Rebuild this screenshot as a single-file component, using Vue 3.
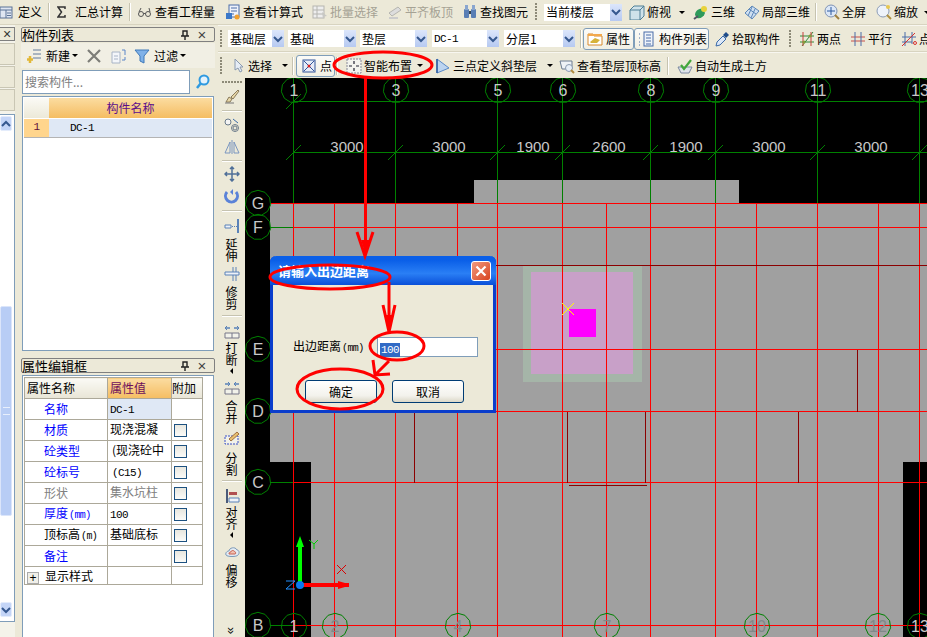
<script setup>
// toolbar icons, 16x16
const icons = {
  define: '<rect x="0" y="3" width="12" height="11" fill="#dfe6f2" stroke="#5b7396"/><path d="M0 6h12M6 6v8M7 9h4M7 11.500h4" stroke="#5b7396" fill="none"/>',
  sigma: '<path d="M1 3h7v2M8 3H1l3.500 5L1 13h7v-2" fill="none" stroke="#333" stroke-width="1.500"/>',
  glasses: '<circle cx="4" cy="10" r="2.500" fill="none" stroke="#555"/><circle cx="11" cy="10" r="2.500" fill="none" stroke="#555"/><path d="M6.500 9.500h2M2 8l2-4M13 8l-1-4" fill="none" stroke="#555"/>',
  calc: '<rect x="4" y="1" width="10" height="12" fill="#eef2fa" stroke="#4a6da8"/><path d="M6 4h6M6 7h6M6 10h3" stroke="#4a6da8"/><rect x="1" y="9" width="6" height="6" fill="#3b78c9"/><circle cx="12" cy="13" r="2.500" fill="#f0a030"/>',
  batch: '<rect x="1" y="2" width="11" height="12" fill="#eee" stroke="#b5b5b0"/><path d="M1 6h11M1 10h11M5 2v12" stroke="#b5b5b0"/><path d="M10 8l5 4-3 .500-1 2.500z" fill="#c8c8c4"/>',
  level: '<path d="M2 9l9-6 3 3-9 6z" fill="#ddd" stroke="#b5b5b0"/><path d="M2 13h9v2H2z" fill="#ccc"/>',
  find: '<rect x="2" y="5" width="5" height="9" rx="1" fill="#5a7fb5"/><rect x="9" y="5" width="5" height="9" rx="1" fill="#5a7fb5"/><rect x="3" y="1" width="3" height="5" fill="#8aa6cf"/><rect x="10" y="1" width="3" height="5" fill="#8aa6cf"/><path d="M7 7h2v3H7z" fill="#345"/>',
  cube: '<path d="M1 6l4-4h10v10l-4 4H1z" fill="#cfe2ea" stroke="#4f7f96"/><path d="M1 6h10v10M11 6l4-4" fill="none" stroke="#4f7f96"/>',
  view3d: '<path d="M2 11c0-4 4-7 8-6l2 4c-1 4-5 6-8 5z" fill="#2e9a5b"/><circle cx="11" cy="5" r="3" fill="#e8d23a"/><path d="M1 15l4-3" stroke="#556" stroke-width="2"/>',
  part3d: '<path d="M1 9l7-7 7 5-7 8z" fill="#cfe0f2" stroke="#5b86b8"/><path d="M5 5l7 5M8 3l-4 9M11 5l-4 9" stroke="#5b86b8" fill="none"/>',
  full: '<circle cx="7" cy="7" r="6" fill="#dbe7f7" stroke="#7f93b5"/><path d="M7 3v8M3 7h8" stroke="#2c5aa0"/><path d="M11 11l4 4" stroke="#a08040" stroke-width="2"/>',
  zoom: '<circle cx="7" cy="7" r="6" fill="#eef3fa" stroke="#8c9db8"/><path d="M11 11l4 4" stroke="#b09040" stroke-width="2"/><circle cx="12" cy="3" r="2" fill="#e8c850"/>',
  attr: '<path d="M1 3h5l1 2h8v9H1z" fill="#fff" stroke="#d88a2c"/><path d="M3 11l5-4 5 2-3 3H4z" fill="#d6b23a"/><path d="M1 3h14v2H1z" fill="#f3a94c"/>',
  list: '<path d="M1 3h2M1 7h2M1 11h2M1 14h2" stroke="#4a6da8" stroke-dasharray="1 1"/><rect x="6" y="1" width="9" height="14" fill="#eef3fa" stroke="#4a6da8"/><path d="M8 4h5M8 7h5M8 10h5M8 13h5" stroke="#4a6da8"/>',
  dropper: '<path d="M2 15l1-4 6-6 3 3-6 6z" fill="#dce8f8" stroke="#3a6aa8"/><path d="M9 4l3-3 3 3-3 3z" fill="#1f4d8a"/>',
  two: '<path d="M3 15L14 1M1 5h14M1 11h14" stroke="#2e8a3a" fill="none"/><path d="M4 1v14M12 1v14" stroke="#c8403a"/><circle cx="5" cy="11" r="1.500" fill="#8a9a3a"/><circle cx="11" cy="5" r="1.500" fill="#8a9a3a"/>',
  parallel: '<path d="M1 6h14M1 10h14" stroke="#c8504a"/><path d="M5 1v14M11 1v14" stroke="#4a6da8"/>',
  pointx: '<path d="M4 1v14M11 1v12M1 6h14M1 11h10" stroke="#4a6da8"/><path d="M1 15L14 2" stroke="#d83030"/><circle cx="14" cy="12" r="1.500" fill="none" stroke="#d83030"/>',
  cursor: '<path d="M5 1v11l3-2 2 4 2-1-2-4h3z" fill="#e6edf6" stroke="#8a9ab0"/>',
  pointbox: '<rect x="2" y="2" width="12" height="12" fill="#e6ecf8" stroke="#33559a"/><path d="M3 3l10 10M13 3L3 13" stroke="#33559a"/><circle cx="8" cy="8" r="1.500" fill="#d82020"/>',
  smart: '<rect x="1" y="1" width="14" height="14" fill="#f3f3ee" stroke="#889" stroke-dasharray="2 1"/><path d="M8 3v3M8 10v3M3 8h3M10 8h3" stroke="#223" stroke-width="1.200"/>',
  tri: '<path d="M2 1l12 9-12 5z" fill="#bcd4f0" stroke="#5a8ac8"/><path d="M2 1v14" stroke="#2c5aa0" stroke-width="1.500"/>',
  top: '<path d="M1 3h12v8H3z" fill="#eef2f6" stroke="#6a7a90"/><circle cx="10" cy="10" r="3.500" fill="#e8f0f8" stroke="#8a9ab0"/><path d="M12 12l3 3" stroke="#b08a40" stroke-width="2"/>',
  auto: '<path d="M1 9h14l-3 6H4z" fill="#dfe3ea" stroke="#7a88a0"/><path d="M4 7l3 4 7-9" fill="none" stroke="#42a83c" stroke-width="2.200"/>',
  add: '<path d="M7 2h8M7 6h8M7 10h8" stroke="#607a9c"/><path d="M4 8v7M1 11.500h6" stroke="#e2b838" stroke-width="2.500"/>',
  del: '<path d="M2 2l12 12M14 2L2 14" stroke="#7d7d78" stroke-width="2.200"/>',
  copy: '<path d="M2 4h8v11H2z" fill="#f4f6fa" stroke="#a8b4c6"/><path d="M4 8h4M4 11h4" stroke="#a8b4c6"/><path d="M12 2h3v5M15 9v3h-3" fill="none" stroke="#5b86c8"/>',
  filter: '<path d="M1 2h14l-5 6v7l-4-2V8z" fill="#7fb1e8" stroke="#3e78b8"/>',
  search: '<circle cx="9" cy="6" r="4.500" fill="#e4f2fc" stroke="#2f9ae0" stroke-width="2"/><path d="M6 9l-4 5" stroke="#2f9ae0" stroke-width="2.500"/>',
  paint: '<path d="M2 14l3-5 3 2-2 3zM7 9l7-7 1 1-6 8z" fill="#e8d8a8" stroke="#8a7a5a"/><path d="M1 15h9" stroke="#777"/>',
  circles: '<circle cx="4" cy="5" r="3" fill="#f4f4f4" stroke="#6a7a8a"/><circle cx="11" cy="11" r="3.500" fill="none" stroke="#6a7a8a"/><circle cx="11" cy="11" r="2" fill="none" stroke="#6a7a8a"/><path d="M9 2l5 4" stroke="#3a6aa8"/>',
  mirror: '<path d="M8 1v14M6 3v11H1zM10 3v11h5z" fill="none" stroke="#7a96c0"/>',
  move: '<path d="M8 1v14M1 8h14M6 3l2-2 2 2M6 13l2 2 2-2M3 6L1 8l2 2M13 6l2 2-2 2" fill="none" stroke="#4f6f98" stroke-width="1.500"/>',
  rotate: '<path d="M3 4a6 6 0 1 0 9 0" fill="none" stroke="#5a82d8" stroke-width="3"/><path d="M9 1v6l-3-3z" fill="#5a82d8"/>',
  extend: '<path d="M14 1v14" stroke="#5a82b8" stroke-width="2"/><path d="M1 7h6v3H1z" fill="#eef2f8" stroke="#5a82b8"/><path d="M8 8.500h5" stroke="#5a82b8" stroke-dasharray="1 1"/>',
  cut: '<path d="M9 1v14M12 1v14" stroke="#5a82b8"/><path d="M1 6h14v3H1z" fill="#eef2f8" stroke="#5a82b8"/>',
  brk: '<path d="M1 4h5M10 4h5" stroke="#5a82b8" stroke-width="1.500"/><path d="M3 2L1 4l2 2M13 2l2 2-2 2" fill="none" stroke="#5a82b8"/><path d="M1 9h14v5H1zM8 9v5" fill="#f2f2ea" stroke="#778"/>',
  merge: '<path d="M1 4h5M10 4h5" stroke="#5a82b8" stroke-width="1.500"/><path d="M4 2l2 2-2 2M12 2l-2 2 2 2" fill="none" stroke="#5a82b8"/><path d="M1 9h14v5H1zM8 9v5" fill="#f2f2ea" stroke="#778"/>',
  split: '<rect x="1" y="6" width="13" height="8" fill="#f2f2ea" stroke="#3a50c8" stroke-dasharray="2 1"/><path d="M5 9l8-7 2 2-8 7z" fill="#e8c070" stroke="#a07040"/>',
  align: '<path d="M3 1v14" stroke="#4a5a7a" stroke-width="2"/><path d="M5 4h8v3H5z" fill="#b05050"/><path d="M5 10h10v4H5z" fill="#eef2f8" stroke="#5a82b8"/>',
  offset: '<path d="M2 11c-1-3 2-4 3-4 0-3 6-5 8-1 2 0 3 3 1 5-1 2-11 2-12 0z" fill="#e4ecf4" stroke="#7a98b8"/><path d="M5 10c0-2 1-2 2-2 0-2 3-2 4 0 1 0 1 2 0 2z" fill="#f0c0b0" stroke="#c86050"/>'
}

const tool = (icon, label, w, extra = {}) => ({ icon, label, w, ...extra })
const sep = (ml = 1) => ({ kind: 'sep', ml })
const grip = (ml = 0) => ({ kind: 'grip', ml })
const combo = (label, w, ml, mono = false) => ({ kind: 'combo', label, w, ml, mono })

const bars = [
  {
    cls: 'bar-top',
    items: [
      tool('define', '定义', 49, { ml: -2 }),
      sep(),
      tool('sigma', '汇总计算', 73, { ml: 5 }),
      sep(),
      tool('glasses', '查看工程量', 83, { ml: 4 }),
      tool('calc', '查看计算式', 87, { ml: 5 }),
      tool('batch', '批量选择', 75, { off: true }),
      tool('level', '平齐板顶', 75, { off: true }),
      tool('find', '查找图元', 72),
      grip(1),
      combo('当前楼层', 78, 3),
      tool('cube', '俯视', 64, { ml: 5, caret: 6 }),
      tool('view3d', '三维', 51),
      tool('part3d', '局部三维', 72),
      sep(1),
      tool('full', '全屏', 52, { ml: 5 }),
      tool('zoom', '缩放', 60, { caret: 4 })
    ]
  },
  {
    cls: 'bar-mid',
    items: [
      grip(),
      combo('基础层', 56, 2),
      combo('基础', 68, 4),
      combo('垫层', 67, 4),
      combo('DC-1', 67, 5, true),
      combo('分层1', 71, 5),
      sep(5),
      tool('attr', '属性', 51, { ml: 1, on: true }),
      tool('list', '构件列表', 75, { on: true, wide: true }),
      tool('dropper', '拾取构件', 75, { ml: 3 }),
      grip(),
      tool('two', '两点', 51, { ml: 2 }),
      tool('parallel', '平行', 51),
      tool('pointx', '点', 40)
    ]
  },
  {
    cls: 'bar-low',
    items: [
      grip(),
      tool('cursor', '选择', 62, { ml: 2, caret: 8 }),
      sep(2),
      tool('pointbox', '点', 39, { ml: 2, on: true, tight: true }),
      sep(1),
      tool('smart', '智能布置', 82, { ml: 6, caret: 3 }),
      tool('tri', '三点定义斜垫层', 121, { ml: 7, caret: 8 }),
      tool('top', '查看垫层顶标高', 107, { ml: 3 }),
      sep(3),
      tool('auto', '自动生成土方', 96, { ml: 6 })
    ]
  }
]

const sideTools = [
  { kind: 'grip', h: 6 },
  { icon: 'paint', h: 24 },
  { kind: 'sep', h: 6 },
  { icon: 'circles', h: 22 },
  { icon: 'mirror', h: 22 },
  { kind: 'sep', h: 6 },
  { icon: 'move', h: 20 },
  { icon: 'rotate', h: 24 },
  { kind: 'sep', h: 6 },
  { icon: 'extend', h: 24 },
  { label: '延伸' },
  { icon: 'cut', h: 24 },
  { label: '修剪' },
  { kind: 'sep', h: 12 },
  { icon: 'brk', h: 20 },
  { label: '打断' },
  { kind: 'caret', h: 10 },
  { icon: 'merge', h: 24 },
  { label: '合并' },
  { icon: 'split', h: 28 },
  { label: '分割' },
  { kind: 'sep', h: 10 },
  { icon: 'align', h: 20 },
  { label: '对齐' },
  { kind: 'caret', h: 10 },
  { icon: 'offset', h: 24 },
  { label: '偏移' }
]

const props = [
  { name: '名称', value: 'DC-1', tone: 'link', mono: true, picked: true, noCheck: true },
  { name: '材质', value: '现浇混凝', tone: 'link' },
  { name: '砼类型', value: '(现浇砼中', tone: 'link', indent: true },
  { name: '砼标号', value: '(C15)', tone: 'link', mono: true, indent: true },
  { name: '形状', value: '集水坑柱', tone: 'dim' },
  { name: '厚度', unit: '(mm)', value: '100', tone: 'link', mono: true },
  { name: '顶标高', unit: '(m)', value: '基础底标', tone: 'plain' },
  { name: '备注', value: '', tone: 'link' }
]

// canvas geometry, page coordinates
const gridX = [293, 395, 497, 562, 650, 715, 817, 919]
const redX = [293, 334, 395, 457, 497, 562, 606, 650, 715, 756, 817, 878, 919]
const redY = [203, 227, 349, 411, 482, 625]
const dims = [
  [347, '3000'], [449, '3000'], [533, '1900'], [609, '2600'],
  [686, '1900'], [769, '3000'], [871, '3000']
]
const topBubbles = [[294, '1'], [396, '3'], [498, '5'], [563, '6'], [651, '8'], [716, '9'], [818, '11'], [920, '13']]
const leftBubbles = [[203, 'G'], [227, 'F'], [349, 'E'], [411, 'D'], [482, 'C'], [625, 'B']]
const lowBubbles = [[294, '1', true], [335, '2'], [458, '4'], [607, '7'], [757, '10'], [878, '12'], [920, '13', true]]
const maroon = [
  [414, 411, 414, 482], [567, 411, 567, 482], [645, 411, 645, 482],
  [798, 411, 798, 482], [857, 349, 857, 411], [568, 485, 646, 485], [270, 265, 927, 265]
]

const bubble = (cx, cy, r = 12.7, n = 11) => {
  const pts = []
  for (let i = 0; i < n; i++) {
    const a = (i / n) * Math.PI * 2 - Math.PI / 2
    pts.push((cx + Math.cos(a) * r).toFixed(1) + ',' + (cy + Math.sin(a) * r).toFixed(1))
  }
  return pts.join(' ')
}
</script>

<template>
  <div class="app">
    <div v-for="bar in bars" :key="bar.cls" class="bar" :class="bar.cls">
      <template v-for="(it, i) in bar.items" :key="i">
        <span v-if="it.kind === 'sep'" class="sep" :style="{ marginLeft: it.ml + 'px' }"></span>
        <span v-else-if="it.kind === 'grip'" class="grip" :style="{ marginLeft: it.ml + 'px' }"></span>
        <span v-else-if="it.kind === 'combo'" class="combo" :style="{ width: it.w + 'px', marginLeft: it.ml + 'px' }">
          <span class="combo-text" :class="{ mono: it.mono }">{{ it.label }}</span>
          <span class="combo-btn"><svg viewBox="0 0 10 10" width="10" height="10"><path d="M1 3l4 4 4-4" fill="none" stroke="#35588f" stroke-width="2" /></svg></span>
        </span>
        <span
          v-else
          class="tool"
          :class="{ off: it.off, on: it.on, wide: it.wide, tight: it.tight }"
          :style="{ width: it.w + 'px', marginLeft: (it.ml || 0) + 'px' }"
        >
          <svg class="ico" viewBox="0 0 16 16" width="16" height="16" v-html="icons[it.icon]"></svg>
          <span class="tool-label">{{ it.label }}</span>
          <i v-if="it.caret" class="caret" :style="{ marginLeft: it.caret + 'px' }"></i>
        </span>
      </template>
    </div>

    <aside class="dock">
      <div class="strip">
        <div class="strip-head">×</div>
        <div class="strip-btn"></div>
        <div class="strip-btn"></div>
        <div class="strip-btn"></div>
        <div class="strip-list">
          <div class="scroll-btn"><svg viewBox="0 0 10 10" width="10" height="10"><path d="M1 7l4-4 4 4" fill="none" stroke="#35588f" stroke-width="2" /></svg></div>
          <div class="scroll-thumb"><span></span></div>
          <div class="scroll-btn"><svg viewBox="0 0 10 10" width="10" height="10"><path d="M1 3l4 4 4-4" fill="none" stroke="#35588f" stroke-width="2" /></svg></div>
        </div>
      </div>

      <div class="panels">
        <div class="panel-head">
          <span class="panel-title">构件列表</span>
          <svg class="pin" viewBox="0 0 10 10" width="10" height="10"><path d="M3 1h4v5H3zM1 6h8M5 6v4" fill="none" stroke="#222" stroke-width="1.400" /></svg>
          <span class="panel-close">×</span>
        </div>
        <div class="list-tools">
          <svg class="ico" viewBox="0 0 16 16" width="16" height="16" v-html="icons.add"></svg>
          <span class="lt-new">新建</span>
          <i class="caret"></i>
          <svg class="ico lt-del" viewBox="0 0 16 16" width="16" height="16" v-html="icons.del"></svg>
          <svg class="ico lt-copy" viewBox="0 0 16 16" width="16" height="16" v-html="icons.copy"></svg>
          <svg class="ico lt-filter" viewBox="0 0 16 16" width="16" height="16" v-html="icons.filter"></svg>
          <span class="lt-new">过滤</span>
          <i class="caret"></i>
        </div>
        <div class="search">
          <div class="search-box">搜索构件...</div>
          <svg class="ico" viewBox="0 0 16 16" width="16" height="16" v-html="icons.search"></svg>
        </div>
        <div class="list-table">
          <div class="lt-row lt-head">
            <span class="lt-index"></span>
            <span class="lt-title">构件名称</span>
          </div>
          <div class="lt-row lt-body">
            <span class="lt-index lt-num mono">1</span>
            <span class="lt-name mono">DC-1</span>
          </div>
        </div>

        <div class="panel-head second">
          <span class="panel-title">属性编辑框</span>
          <svg class="pin" viewBox="0 0 10 10" width="10" height="10"><path d="M3 1h4v5H3zM1 6h8M5 6v4" fill="none" stroke="#222" stroke-width="1.400" /></svg>
          <span class="panel-close">×</span>
        </div>
        <div class="prop-wrap">
          <table class="props">
            <thead>
              <tr>
                <th class="pc-name">属性名称</th>
                <th class="pc-value">属性值</th>
                <th class="pc-extra">附加</th>
              </tr>
            </thead>
            <tbody>
              <tr v-for="p in props" :key="p.name">
                <td class="name" :class="p.tone">{{ p.name }}<span v-if="p.unit" class="unit mono">{{ p.unit }}</span></td>
                <td class="value" :class="{ picked: p.picked, dim: p.tone === 'dim', indent: p.indent }"><span :class="{ mono: p.mono }">{{ p.value }}</span></td>
                <td class="extra"><i v-if="!p.noCheck" class="check"></i></td>
              </tr>
              <tr class="last">
                <td class="name plain"><i class="plus">+</i>显示样式</td>
                <td></td>
                <td></td>
              </tr>
            </tbody>
          </table>
        </div>
      </div>
    </aside>

    <nav class="side">
      <template v-for="(s, i) in sideTools" :key="i">
        <div v-if="s.kind === 'grip'" class="side-grip" :style="{ height: s.h + 'px' }"></div>
        <div v-else-if="s.kind === 'sep'" class="side-sep" :style="{ height: s.h + 'px' }"><span></span></div>
        <div v-else-if="s.kind === 'caret'" class="side-caret" :style="{ height: s.h + 'px' }"><i></i></div>
        <div v-else-if="s.label" class="side-label">{{ s.label }}</div>
        <div v-else class="side-icon" :style="{ height: s.h + 'px' }">
          <svg viewBox="0 0 16 16" width="16" height="16" v-html="icons[s.icon]"></svg>
        </div>
      </template>
      <div class="side-more">»</div>
    </nav>

    <main class="stage">
      <svg class="plan" viewBox="245 78 682 559" width="682" height="559">
        <rect x="245" y="78" width="682" height="559" fill="#000" />
        <path d="M270 203H474V180H739V203H927V462H270z" fill="#a0a0a0" />
        <path d="M311 462H903V637H311z" fill="#a0a0a0" />
        <rect x="523" y="266" width="119" height="116" fill="#a5b5a8" />
        <rect x="531" y="272" width="102" height="102" fill="#c8a0c8" />
        <rect x="569" y="309" width="27" height="28" fill="#ff00ff" />

        <g shape-rendering="crispEdges" stroke-width="1">
          <line x1="293" y1="101.500" x2="927" y2="101.500" stroke="#008000" />
          <line x1="293" y1="152.500" x2="927" y2="152.500" stroke="#008000" />
          <line v-for="x in gridX" :key="'g' + x" :x1="x + 0.5" y1="78" :x2="x + 0.5" y2="203" stroke="#008000" />
          <line v-for="b in leftBubbles" :key="'lg' + b[0]" x1="270" :y1="b[0] + 0.5" x2="293" :y2="b[0] + 0.5" stroke="#008000" />
          <line v-for="x in redX" :key="'r' + x" :x1="x + 0.5" y1="203" :x2="x + 0.5" y2="637" stroke="#ff0000" />
          <line v-for="y in redY" :key="'h' + y" x1="293" :y1="y + 0.5" x2="927" :y2="y + 0.5" stroke="#ff0000" />
          <line x1="270" y1="203.500" x2="293" y2="203.500" stroke="#ff0000" />
          <line v-for="(m, i) in maroon" :key="'m' + i" :x1="m[0] + 0.5" :y1="m[1] + 0.5" :x2="m[2] + 0.5" :y2="m[3] + 0.5" stroke="#8b0000" />
        </g>

        <path d="M286 109l15-15" stroke="#008000" />
        <path v-for="x in gridX" :key="'t' + x" :d="`M${x - 7} 160l15-15`" stroke="#008000" />
        <path d="M562 315l12-12M562 303l12 12" stroke="#ffff00" shape-rendering="crispEdges" />

        <text v-for="d in dims" :key="d[0]" :x="d[0]" y="152" class="dim-text">{{ d[1] }}</text>

        <g v-for="b in topBubbles" :key="'tb' + b[0]">
          <polygon :points="bubble(b[0], 90)" fill="none" stroke="#008000" />
          <text :x="b[0]" y="96" class="bubble-text">{{ b[1] }}</text>
        </g>
        <g v-for="b in leftBubbles" :key="'lb' + b[1]">
          <polygon :points="bubble(258, b[0])" fill="none" stroke="#008000" />
          <text x="258" :y="b[0] + 6" class="bubble-text">{{ b[1] }}</text>
        </g>
        <g v-for="b in lowBubbles" :key="'bb' + b[0]">
          <polygon :points="bubble(b[0], 626)" fill="none" stroke="#008000" />
          <text :x="b[0]" y="632" class="bubble-text" :class="{ muted: !b[2] }">{{ b[1] }}</text>
        </g>

        <!-- ucs gizmo -->
        <path d="M298 585V547H296L300 536L304 547H302V585z" fill="#00ff00" />
        <path d="M300 583H338V581L345 583H349V587H345L338 589V587H300z" fill="#ff0000" />
        <circle cx="300" cy="585" r="4" fill="#0a78f0" />
        <path d="M309 540l5 4 4-4M314 544v5" fill="none" stroke="#00d000" />
        <path d="M337 565l9 9M346 565l-9 9" stroke="#d80000" />
        <path d="M286 581h9l-9 8h9" fill="none" stroke="#2090ff" />
      </svg>

      <section class="dialog">
        <header class="dialog-title">
          <span>请输入出边距离</span>
          <button class="dialog-close">
            <svg viewBox="0 0 12 12" width="12" height="12"><path d="M1.500 1.500l9 9M10.500 1.500l-9 9" stroke="#fff" stroke-width="2.200" /></svg>
          </button>
        </header>
        <div class="dialog-body">
          <div class="field">
            <label>出边距离<span class="unit mono">(mm)</span></label>
            <div class="field-input"><span class="mono">100</span></div>
          </div>
          <div class="buttons">
            <button class="btn">确定</button>
            <button class="btn">取消</button>
          </div>
        </div>
      </section>
    </main>

    <svg class="marks" viewBox="0 0 927 637" width="927" height="637">
      <g fill="none" stroke="#ff0000" stroke-width="3">
        <ellipse cx="383" cy="65" rx="49" ry="13" />
        <ellipse cx="330" cy="277" rx="60" ry="12" />
        <ellipse cx="397" cy="346" rx="27" ry="14" />
        <ellipse cx="340" cy="389" rx="43" ry="20" />
        <path d="M365.500 78V254M357 232l8 24 8-24" />
        <path d="M389 282V328M383 305l6 27 6-27" />
        <path d="M389 361L376 374M373 360l2 15 15-1" />
      </g>
      <path d="M361 240h9l-4 16zM385 315h8l-4 16z" fill="#ff0000" />
    </svg>
  </div>
</template>

<style scoped>
.app {
  position: relative;
  width: 927px;
  height: 637px;
  overflow: hidden;
  display: grid;
  grid-template-columns: 218px 27px 682px;
  grid-template-rows: 25px 27px 26px 559px;
  background: #ece9d8;
  font-family: "Noto Sans CJK SC", "Liberation Sans", sans-serif;
  font-size: 12px;
  line-height: 16px;
  color: #000;
}
.mono {
  font-family: "Liberation Mono", "Noto Sans CJK SC", monospace;
  font-size: 11px;
  letter-spacing: -0.6px;
}
.bar {
  display: flex;
  align-items: center;
  white-space: nowrap;
  overflow: hidden;
  background: #ece9d8;
}
.bar-top {
  grid-column: 1 / 4;
  grid-row: 1;
  border-bottom: 1px solid #d8d4c0;
}
.bar-mid {
  grid-column: 2 / 4;
  grid-row: 2;
  border-bottom: 1px solid #d8d4c0;
  border-top: 1px solid #f8f7f0;
}
.bar-low {
  grid-column: 2 / 4;
  grid-row: 3;
  border-top: 1px solid #f8f7f0;
}
.sep {
  flex: none;
  width: 2px;
  height: 18px;
  border-left: 1px solid #c6c3b0;
  border-right: 1px solid #fff;
  box-sizing: border-box;
}
.grip {
  flex: none;
  width: 8px;
  height: 18px;
  background: radial-gradient(circle at 1px 1px, #8d8a78 1px, transparent 1px) 2px 0 / 2px 3px repeat-y;
}
.combo {
  flex: none;
  display: flex;
  align-items: center;
  height: 17px;
  background: #fff;
}
.combo-text {
  flex: 1;
  padding-left: 2px;
}
.combo-btn {
  flex: none;
  width: 12px;
  height: 17px;
  display: flex;
  align-items: center;
  justify-content: center;
  background: linear-gradient(#dce6fb, #b6c9f1);
}
.tool {
  flex: none;
  display: flex;
  align-items: center;
  box-sizing: border-box;
  padding-left: 2px;
  gap: 2px;
  height: 22px;
}
.ico {
  flex: none;
}
.tool.off {
  color: #a5a294;
}
.tool.on {
  background: linear-gradient(#fbfbf8, #f1efe4);
  border: 1px solid #7f9db9;
  border-radius: 3px;
  padding-left: 3px;
  gap: 3px;
}
.tool.wide {
  gap: 5px;
}
.tool.tight {
  padding-left: 4px;
  gap: 3px;
}
.caret {
  flex: none;
  width: 0;
  height: 0;
  border-left: 3px solid transparent;
  border-right: 3px solid transparent;
  border-top: 3px solid #000;
}

.dock {
  grid-column: 1;
  grid-row: 2 / 5;
  display: flex;
  min-height: 0;
  overflow: hidden;
}
.strip {
  flex: none;
  width: 15px;
  padding-top: 2px;
  display: flex;
  flex-direction: column;
  background: #f4f3ea;
}
.strip-head {
  height: 14px;
  border: 1px solid #808080;
  border-left: 0;
  box-sizing: border-box;
  background: #ece9d8;
  font: 14px/12px "Liberation Sans", sans-serif;
  text-align: center;
  color: #333;
}
.strip-btn {
  height: 22px;
  margin-top: 2px;
  background: #ece9d8;
  border: 1px solid #c9c6b4;
  border-left: 0;
  box-sizing: border-box;
}
.strip-btn + .strip-btn {
  margin-top: 1px;
}
.strip-list {
  margin-top: 3px;
  flex: 1;
  margin-bottom: 15px;
  background: #fff;
  border: 1px solid #7f9db9;
  border-left: 0;
  box-sizing: border-box;
  display: flex;
  flex-direction: column;
  padding: 1px 2px 1px 0;
}
.scroll-btn {
  flex: none;
  height: 15px;
  display: flex;
  align-items: center;
  justify-content: center;
  background: #c4d5f7;
  border: 1px solid #e4ecfb;
  border-radius: 2px;
  box-sizing: border-box;
}
.scroll-thumb {
  flex: none;
  margin: 175px 0 86px;
  height: 210px;
  background: #b8cdf5;
  border: 1px solid #dbe5fa;
  border-radius: 2px;
  box-sizing: border-box;
  display: flex;
  align-items: center;
  justify-content: center;
}
.scroll-thumb span {
  width: 7px;
  height: 6px;
  border-top: 1px solid #e8effc;
  border-bottom: 1px solid #e8effc;
}
.panels {
  flex: none;
  width: 194px;
  margin-left: 6px;
  padding-top: 2px;
  display: flex;
  flex-direction: column;
  min-height: 0;
}
.panel-head {
  flex: none;
  display: flex;
  align-items: center;
  height: 15px;
  box-sizing: border-box;
  border: 1px solid #808080;
  border-radius: 2px;
  background: #ece9d8;
}
.panel-head.second {
  margin-top: 7px;
}
.panel-title {
  flex: 1;
  font-size: 13px;
}
.pin {
  flex: none;
}
.panel-close {
  flex: none;
  width: 24px;
  text-align: center;
  font: 15px/12px "Liberation Sans", sans-serif;
  color: #444;
}
.list-tools {
  flex: none;
  height: 25px;
  margin-top: 1px;
  display: flex;
  align-items: center;
  padding-left: 5px;
  background: #f1efe4;
}
.lt-new {
  margin-left: 4px;
  margin-right: 2px;
}
.lt-del {
  margin-left: 8px;
}
.lt-copy {
  margin-left: 8px;
}
.lt-filter {
  margin-left: 8px;
}
.search {
  flex: none;
  height: 24px;
  margin-top: 2px;
  display: flex;
  align-items: center;
  gap: 5px;
  padding-left: 1px;
}
.search-box {
  width: 168px;
  height: 24px;
  box-sizing: border-box;
  border: 1px solid #7f9db9;
  background: #fff;
  color: #808080;
  font-size: 12px;
  line-height: 22px;
  padding-left: 2px;
}
.list-table {
  flex: none;
  height: 255px;
  margin: 2px 0 0 1px;
  width: 192px;
  box-sizing: border-box;
  border: 1px solid #7f9db9;
  background: #fff;
  padding: 1px;
}
.lt-row {
  display: flex;
}
.lt-head {
  height: 20px;
}
.lt-body {
  height: 19px;
  border-bottom: 1px solid #b4b4b4;
  box-sizing: border-box;
  margin-top: 1px;
}
.lt-index {
  flex: none;
  width: 25px;
  background: linear-gradient(#fbfaf5, #ece9d8);
}
.lt-title {
  flex: 1;
  text-align: center;
  line-height: 20px;
  color: #5c0f8b;
  background: linear-gradient(#fbdca0, #f5bd62);
}
.lt-num {
  background: #ffd58d;
  color: #5c0f3b;
  text-align: center;
  line-height: 17px;
}
.lt-name {
  flex: 1;
  background: #dfe8f5;
  padding-left: 21px;
  line-height: 18px;
}
.prop-wrap {
  flex: 1;
  min-height: 0;
  width: 192px;
  margin: 2px 0 0 1px;
  box-sizing: border-box;
  border: 1px solid #7f9db9;
  border-bottom: 0;
  background: #fff;
  padding: 1px;
}
.props {
  border-collapse: collapse;
  table-layout: fixed;
  width: 178px;
}
.props th,
.props td {
  box-sizing: border-box;
  border: 1px solid #aca899;
  padding: 0;
  height: 21px;
  font-weight: 400;
  text-align: left;
  white-space: nowrap;
}
.props thead th {
  background: linear-gradient(#fbfaf5, #e8e5d6);
}
.pc-name {
  width: 83px;
  padding-left: 2px !important;
}
.pc-value {
  width: 64px;
  color: #6d0f5c;
  padding-left: 2px !important;
}
.props thead .pc-value {
  background: linear-gradient(#fbdca0, #f5bd62);
}
.pc-extra {
  width: 31px;
}
.name {
  padding-left: 19px !important;
}
.name.link {
  color: #0000ff;
}
.name.dim,
.value.dim {
  color: #808080;
}
.unit {
  font-size: 10px;
  margin-left: 1px;
}
.value {
  padding-left: 2px !important;
  vertical-align: top;
  line-height: 17px;
}
.value.indent {
  padding-left: 4px !important;
}
.value.picked {
  background: #dfe8f5;
  vertical-align: middle;
}
.extra {
  padding-left: 2px !important;
}
.check {
  display: block;
  width: 13px;
  height: 13px;
  box-sizing: border-box;
  border: 1px solid #1c5180;
  background: linear-gradient(#e8e7df, #fbfbf8);
}
.props .last td {
  height: 18px;
}
.props .last .name {
  padding-left: 2px !important;
}
.plus {
  display: inline-block;
  width: 12px;
  height: 12px;
  margin-right: 6px;
  border: 1px solid #aaa;
  box-sizing: border-box;
  background: #f0efe8;
  font: 12px/10px "Liberation Sans", sans-serif;
  text-align: center;
  vertical-align: -1px;
}

.side {
  grid-column: 2;
  grid-row: 4;
  display: flex;
  flex-direction: column;
  align-items: center;
  min-height: 0;
}
.side-grip {
  width: 20px;
  background: radial-gradient(circle at 1px 1px, #8d8a78 1px, transparent 1px) 0 3px / 3px 2px repeat-x;
}
.side-sep {
  width: 20px;
  display: flex;
  align-items: center;
}
.side-sep span {
  width: 100%;
  border-top: 1px solid #c6c3b0;
  border-bottom: 1px solid #fff;
}
.side-icon {
  display: flex;
  align-items: center;
  justify-content: center;
}
.side-label {
  width: 12px;
  height: 24px;
  line-height: 12px;
  flex: none;
  text-align: center;
}
.side-caret {
  display: flex;
  align-items: center;
  justify-content: center;
}
.side-caret i {
  width: 0;
  height: 0;
  border-top: 3px solid transparent;
  border-bottom: 3px solid transparent;
  border-right: 3px solid #000;
}
.side-more {
  margin-top: auto;
  transform: rotate(90deg);
  font: 13px/13px "Liberation Sans", sans-serif;
}

.stage {
  grid-column: 3;
  grid-row: 4;
  position: relative;
  overflow: hidden;
}
.plan {
  display: block;
}
.dim-text {
  font: 15px "Liberation Sans", sans-serif;
  fill: #c8c8c8;
  text-anchor: middle;
}
.bubble-text {
  font: 16px "Liberation Sans", sans-serif;
  fill: #c8c8c8;
  text-anchor: middle;
}
.bubble-text.muted {
  fill: #808888;
}
.dialog {
  position: absolute;
  left: 25px;
  top: 178px;
  width: 226px;
  height: 157px;
  box-sizing: border-box;
  display: flex;
  flex-direction: column;
  border: 3px solid #0a3dcc;
  border-top: 0;
  border-radius: 6px 6px 0 0;
  background: #ece9d8;
}
.dialog-title {
  flex: none;
  height: 29px;
  margin: 0 -3px;
  padding: 0 5px 0 8px;
  display: flex;
  align-items: center;
  justify-content: space-between;
  border-radius: 6px 6px 0 0;
  background: linear-gradient(#0a5fe8, #0a5fe8 15%, #2a7ff5 60%, #0a4fd8);
  color: #fff;
  font-size: 13px;
  font-weight: 700;
}
.dialog-close {
  width: 20px;
  height: 20px;
  padding: 0;
  display: flex;
  align-items: center;
  justify-content: center;
  border: 1px solid #fff;
  border-radius: 3px;
  background: linear-gradient(135deg, #f09a80, #d9431e);
}
.dialog-body {
  flex: 1;
  padding: 52px 0 0 20px;
}
.field {
  display: flex;
  align-items: center;
}
.field label {
  width: 84px;
}
.field-input {
  width: 101px;
  height: 20px;
  box-sizing: border-box;
  border: 1px solid #7f9db9;
  background: #fff;
  padding: 2px 0 0 2px;
}
.field-input span {
  display: inline-block;
  padding: 0 1px;
  height: 14px;
  line-height: 14px;
  background: #316ac5;
  color: #fff;
}
.buttons {
  display: flex;
  gap: 15px;
  margin: 23px 0 0 12px;
}
.btn {
  width: 72px;
  height: 23px;
  padding: 0;
  border: 1px solid #003c74;
  border-radius: 3px;
  background: linear-gradient(#fff, #f3f2ec 70%, #dcd8c8);
  font: 12px "Noto Sans CJK SC", sans-serif;
  color: #000;
}
.marks {
  position: absolute;
  left: 0;
  top: 0;
  pointer-events: none;
}
</style>
